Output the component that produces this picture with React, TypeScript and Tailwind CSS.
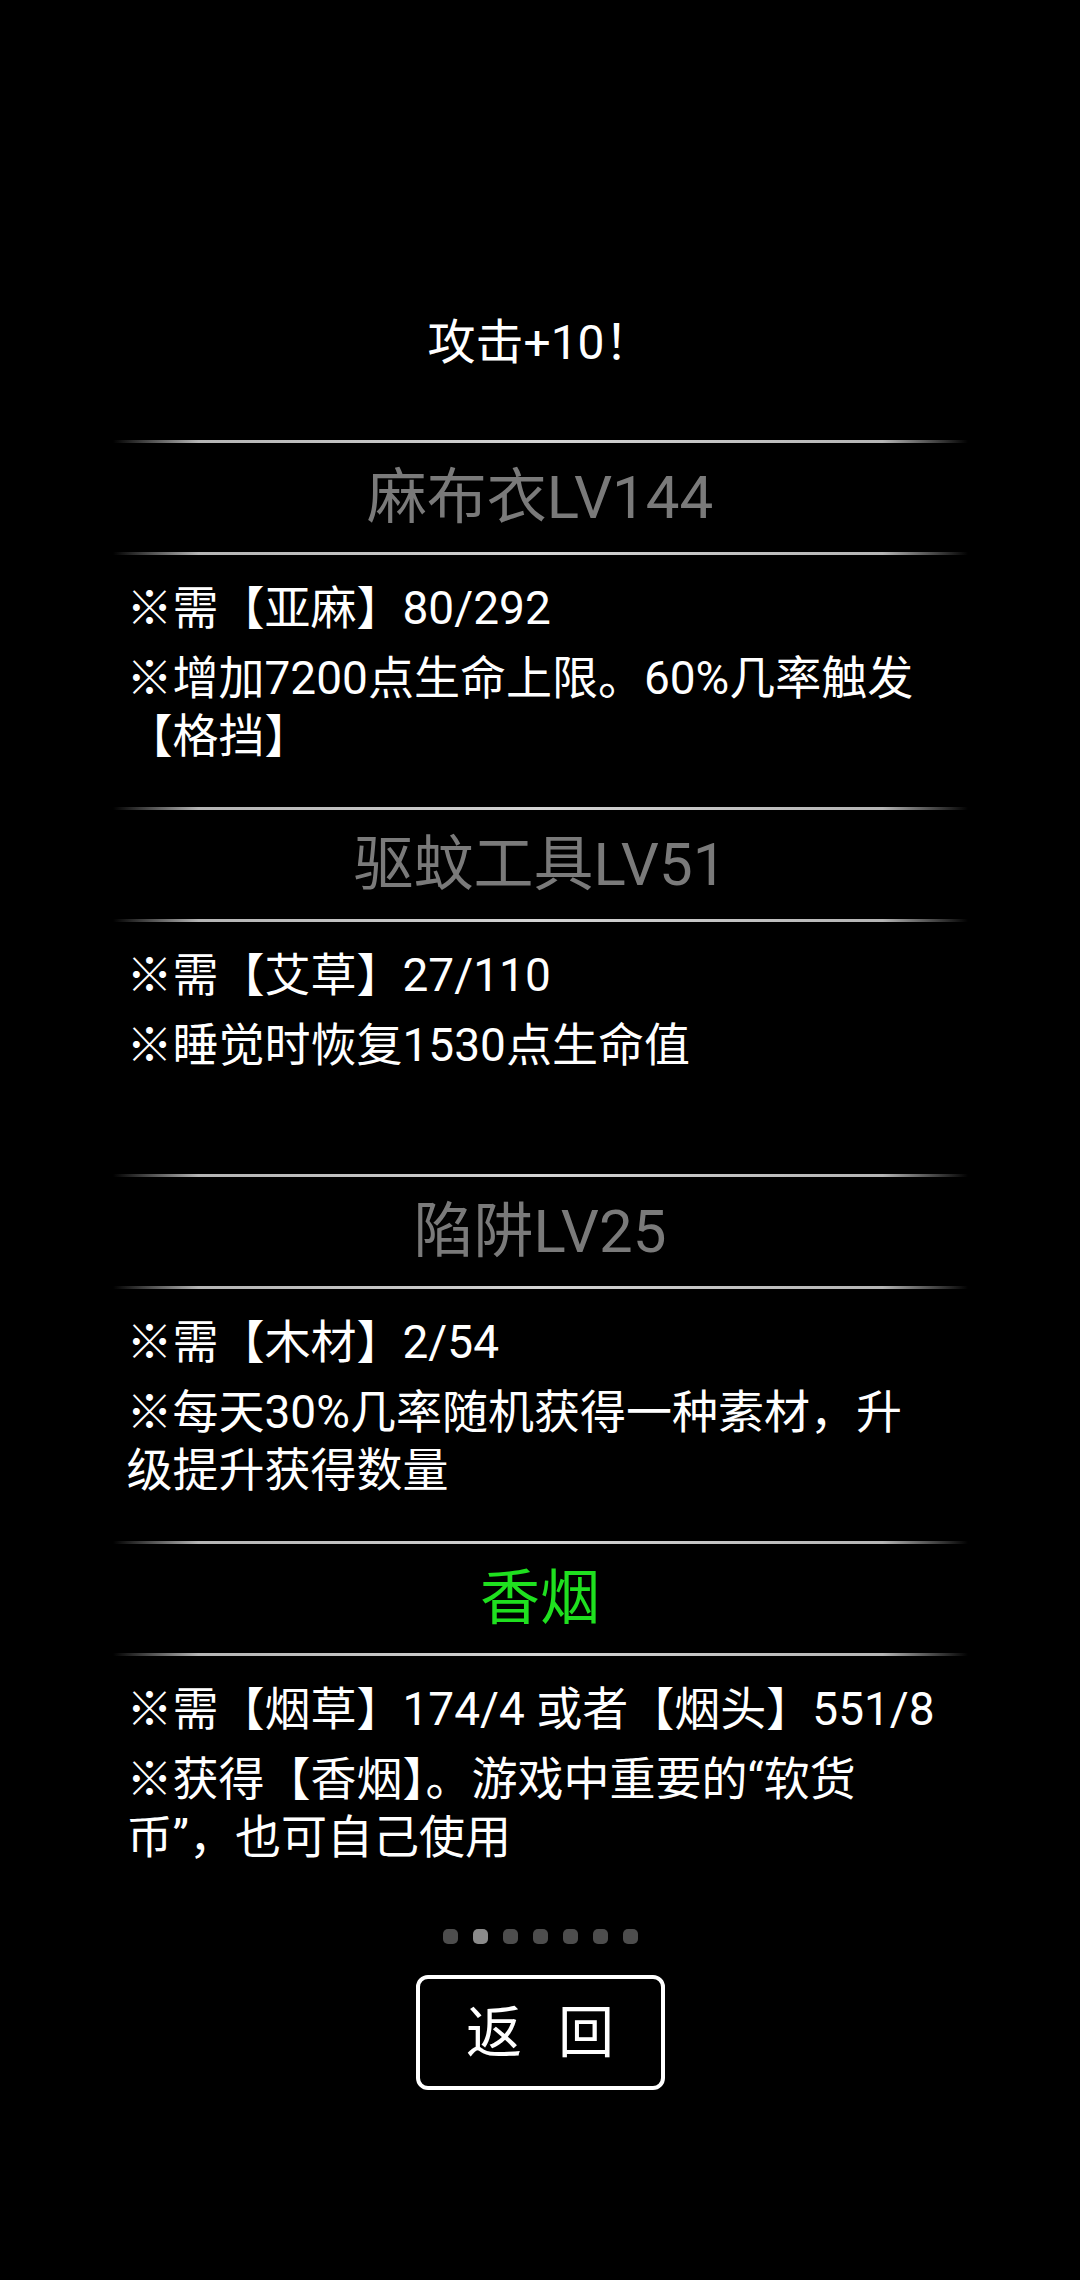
import React from 'react'

interface Recipe {
    name: string
    highlight?: boolean
    notes: string[]
}

const recipes: Recipe[] = [
    {
        name: '麻布衣LV144',
        notes: ['※需【亚麻】80/292', '※增加7200点生命上限。60%几率触发【格挡】'],
    },
    {
        name: '驱蚊工具LV51',
        notes: ['※需【艾草】27/110', '※睡觉时恢复1530点生命值'],
    },
    {
        name: '陷阱LV25',
        notes: ['※需【木材】2/54', '※每天30%几率随机获得一种素材，升级提升获得数量'],
    },
    {
        name: '香烟',
        highlight: true,
        notes: ['※需【烟草】174/4 或者【烟头】551/8', '※获得【香烟】。游戏中重要的“软货币”，也可自己使用'],
    },
]

function Divider() {
    return (
        <div className="h-[3px] w-full bg-[linear-gradient(to_right,transparent,#b4b4b4_10%,#d4d4d4_50%,#b4b4b4_90%,transparent)]" />
    )
}

function RecipeBlock({ recipe }: { recipe: Recipe }) {
    return (
        <div className="flex flex-col">
            <Divider />
            <div
                className={`flex h-[109px] items-center justify-center text-[60px] leading-none ${
                    recipe.highlight ? 'text-[#1fe01f]' : 'text-[#7a7a7a]'
                }`}
            >
                {recipe.name}
            </div>
            <Divider />
            <div className="flex h-[252px] flex-col gap-[12px] pl-[14px] pr-[28px] pt-[24px] text-[46px] leading-[58px] text-white">
                {recipe.notes.map((note) => (
                    <p key={note}>{note}</p>
                ))}
            </div>
        </div>
    )
}

export default function App() {
    const activePage = 1

    return (
        <div className="min-h-screen w-[1080px] bg-black font-[Roboto,'Noto_Sans_CJK_SC',sans-serif] text-white">
            <div className="mx-auto flex w-[855px] flex-col pt-[313px]">
                <h1 className="mb-[67px] text-center text-[48px] leading-[60px]">攻击+10！</h1>

                {recipes.map((recipe) => (
                    <RecipeBlock key={recipe.name} recipe={recipe} />
                ))}

                <div className="mt-[21px] flex justify-center gap-[15px]">
                    {Array.from({ length: 7 }).map((_, i) => (
                        <span
                            key={i}
                            className={`h-[15px] w-[15px] rounded-[5px] ${
                                i === activePage ? 'bg-[#8a8a8a]' : 'bg-[#4d4d4d]'
                            }`}
                        />
                    ))}
                </div>

                <div className="mt-[31px] flex justify-center">
                    <button className="flex h-[115px] w-[249px] items-center justify-center gap-[36px] rounded-[12px] border-[4px] border-white text-[56px] leading-none text-white">
                        <span>返</span>
                        <span>回</span>
                    </button>
                </div>
            </div>
        </div>
    )
}
